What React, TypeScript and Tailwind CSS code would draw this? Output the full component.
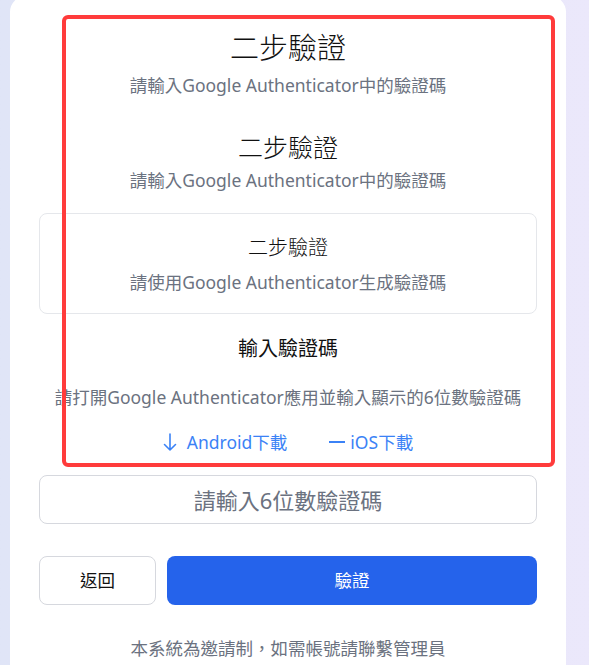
import React from 'react'

const ArrowDown = () => (
    <svg width="14" height="20" viewBox="0 0 14 20" fill="none" xmlns="http://www.w3.org/2000/svg">
        <path d="M7 2v16M1.5 12.5L7 18l5.5-5.5" stroke="#3b82f6" strokeWidth="1.6" strokeLinecap="round" strokeLinejoin="round" />
    </svg>
)

const App = () => {
    return (
        <div className="min-h-screen h-[665px] overflow-hidden bg-linear-to-r from-[#e0e5f7] to-[#ebe8fb] font-['Noto_Sans','Noto_Sans_CJK_TC',sans-serif]">
            <div className="relative ml-[10px] -mt-1 w-[556px] bg-white rounded-2xl px-[29px] pt-[34px] pb-10">

                <section className="flex flex-col items-center">
                    <h1 className="text-[29px] leading-[36px] font-light text-[#111111]">二步驗證</h1>
                    <p className="mt-[7px] text-[17.5px] leading-[24px] text-[#6b7280]">請輸入Google Authenticator中的驗證碼</p>
                </section>

                <section className="flex flex-col items-center mt-[34px]">
                    <h2 className="text-[25px] leading-[32px] font-light text-[#111111]">二步驗證</h2>
                    <p className="mt-[5px] text-[17.5px] leading-[24px] text-[#6b7280]">請輸入Google Authenticator中的驗證碼</p>
                </section>

                <section className="mt-[21px] flex flex-col items-center border border-[#e5e7eb] rounded-lg pt-[20px] pb-[19px]">
                    <h3 className="text-[20px] leading-[28px] font-light text-[#111111]">二步驗證</h3>
                    <p className="mt-[8px] text-[17.5px] leading-[24px] text-[#6b7280]">請使用Google Authenticator生成驗證碼</p>
                </section>

                <section className="flex flex-col items-center">
                    <h3 className="mt-[21px] text-[20px] leading-[28px] font-normal text-[#111111]">輸入驗證碼</h3>
                    <p className="mt-[22px] text-[17.5px] leading-[24px] text-[#6b7280] whitespace-nowrap">請打開Google Authenticator應用並輸入顯示的6位數驗證碼</p>
                    <div className="mt-[21px] flex items-center gap-[42px] text-[17.5px] leading-[24px] text-[#3b82f6]">
                        <a className="flex items-center gap-[10px]" href="#">
                            <ArrowDown />
                            <span>Android下載</span>
                        </a>
                        <a className="flex items-center gap-[5px]" href="#">
                            <span className="w-4 h-[2px] bg-[#3b82f6]" />
                            <span>iOS下載</span>
                        </a>
                    </div>
                </section>

                <input
                    className="mt-[21px] w-full h-[49px] border border-[#d6d8de] rounded-lg text-center text-[22px] text-[#374151] placeholder:text-[#6b7280] outline-none"
                    placeholder="請輸入6位數驗證碼"
                />

                <div className="mt-[32px] flex gap-[11px]">
                    <button className="w-[117px] h-[49px] border border-[#d6d8de] rounded-lg bg-white text-[17.5px] text-[#111111]">返回</button>
                    <button className="flex-1 h-[49px] rounded-lg bg-[#2563eb] text-[17.5px] text-white">驗證</button>
                </div>

                <p className="mt-[31px] text-center text-[17.5px] leading-[24px] text-[#6b7280]">本系統為邀請制，如需帳號請聯繫管理員</p>

                <div className="absolute left-[52px] top-[19px] w-[493px] h-[452px] border-4 border-[#ff3b3b] rounded-[6px] pointer-events-none" />
            </div>
        </div>
    )
}

export default App
